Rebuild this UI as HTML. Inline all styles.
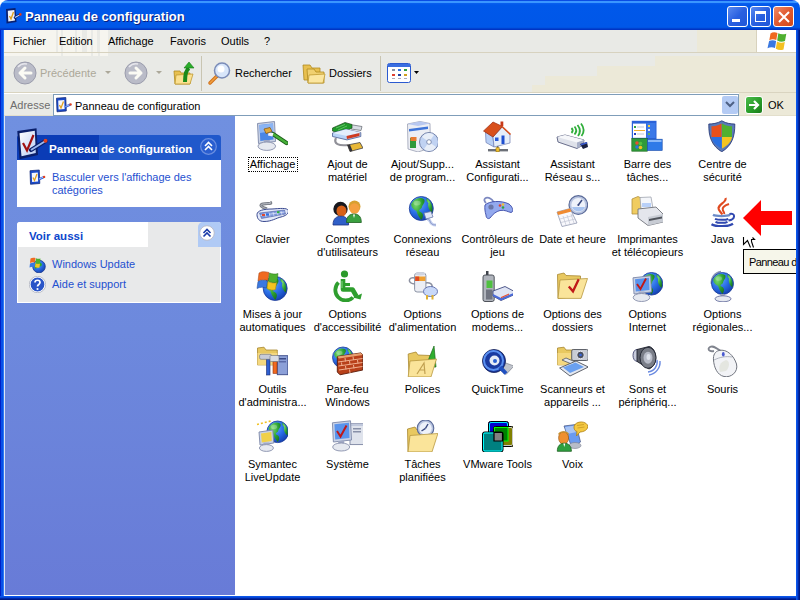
<!DOCTYPE html>
<html><head><meta charset="utf-8">
<style>
*{margin:0;padding:0;box-sizing:border-box}
html,body{width:800px;height:600px;overflow:hidden;background:#fff;font-family:"Liberation Sans",sans-serif;font-size:11px;color:#000}
.a{position:absolute;display:block}
#title{left:0;top:0;width:800px;height:30px;border-radius:8px 8px 0 0;background:linear-gradient(#0a4ce4 0,#0a4ce4 1px,#3a96ff 1px,#3a96ff 3px,#0a60f0 3px,#0058ea 5px,#0057e8 27px,#0050dc 28px,#0034c4 29px,#0034c4 30px)}
#ttl{left:25px;top:9px;font-weight:bold;font-size:13px;line-height:15px;color:#fff;text-shadow:1px 1px 0 #0a1e7c;white-space:nowrap}
.tbtn{position:absolute;top:6px;width:21px;height:21px;border:1px solid #fff;border-radius:3px;background:linear-gradient(135deg,#5a8af0,#2a60e0 50%,#1f56d8)}
#bl{left:0;top:30px;width:4px;height:570px;background:linear-gradient(90deg,#0020c8 0,#0020c8 1px,#0850e8 1px,#0850e8 3px,#2a78f4 3px,#2a78f4 4px)}
#br{left:796px;top:30px;width:4px;height:570px;background:linear-gradient(90deg,#0a55ea 0,#0a55ea 1px,#0646d4 1px,#0646d4 2px,#0028a8 2px,#0028a8 3px,#001a84 3px)}
#bb{left:0;top:596px;width:800px;height:4px;background:linear-gradient(#0a55ea 0,#0a55ea 1px,#0646d4 1px,#0646d4 2px,#0028a8 2px,#0028a8 3px,#001a84 3px)}
#menu{left:4px;top:30px;width:792px;height:22px;background:transparent}
#menubg{left:4px;top:30px;width:792px;height:22px;background:#e9eae6}
#menu span{position:absolute;top:5px;line-height:13px;z-index:2}
#menu{z-index:1}
#logo{left:757px;top:30px;width:39px;height:22px;background:#fff}
#tb{left:4px;top:52px;width:792px;height:41px;background:#e9eae6;border-top:1px solid #d7d2bf}
#tb2{left:4px;top:53px;width:792px;height:3px;background:#e9eae6}
#addr{left:4px;top:92px;width:792px;height:24px;background:#e9eae6;border-top:1px solid #d9d4c0}
#addrw{left:4px;top:93px;width:792px;height:1px;background:#fff}
#abox{left:53px;top:94px;width:686px;height:22px;background:#fff;border:1px solid #7f9db9}
#panel{left:4px;top:116px;width:231px;height:480px;background:linear-gradient(#7090e0,#6d89dd 45%,#687bd7)}
#content{left:235px;top:116px;width:561px;height:480px;background:#fff}
#pbot{left:4px;top:595px;width:231px;height:1px;background:#fff}
#pleft{left:4px;top:116px;width:1px;height:480px;background:#dde4f6}
.lbl{position:absolute;width:75px;text-align:center;line-height:13px;white-space:nowrap}
.tt{position:absolute;line-height:13px;white-space:nowrap}
.lnk{color:#1f50d0}
</style></head><body>
<svg width="0" height="0" style="position:absolute"><defs>
<radialGradient id="gblue" cx="35%" cy="30%" r="75%"><stop offset="0" stop-color="#6ab0ff"/><stop offset=".55" stop-color="#2a6ee6"/><stop offset="1" stop-color="#1440b0"/></radialGradient>
<radialGradient id="ggreen" cx="35%" cy="30%" r="80%"><stop offset="0" stop-color="#7ad870"/><stop offset=".6" stop-color="#2aa030"/><stop offset="1" stop-color="#1a7020"/></radialGradient>
</defs></svg>
<div id="title" class="a"></div>
<svg class="a" style="left:5px;top:7px" width="18" height="19" viewBox="0 0 18 19">
<polygon points="1,2 10.5,1 11.5,15 1.5,16.5" fill="#0a2070"/>
<polygon points="2.8,3.8 9.3,3 10,13.5 3.3,14.5" fill="#eef2fc"/>
<path d="M4.5,9 L6,12 L8.5,5" stroke="#e0a020" stroke-width="1.4" fill="none"/>
<line x1="10" y1="10.5" x2="15" y2="7.5" stroke="#0a2070" stroke-width="2.6" stroke-linecap="round"/>
<line x1="10" y1="10.5" x2="14.5" y2="8" stroke="#b8d0f8" stroke-width="1.2"/>
<circle cx="15.3" cy="7.4" r="1.3" fill="#e04020"/>
</svg>
<div id="ttl" class="a">Panneau de configuration</div>
<div class="tbtn" style="left:727px"><div class="a" style="left:4px;top:12px;width:8px;height:3px;background:#fff"></div></div>
<div class="tbtn" style="left:750px"><div class="a" style="left:4px;top:4px;width:11px;height:11px;border:1px solid #fff;border-top-width:3px"></div></div>
<div class="tbtn" style="left:773px;background:linear-gradient(135deg,#f08a68,#e05a30 50%,#d04818)">
<svg class="a" style="left:4px;top:4px" width="12" height="12" viewBox="0 0 12 12"><path d="M1,1 L11,11 M11,1 L1,11" stroke="#fff" stroke-width="2"/></svg></div>
<div id="bl" class="a"></div>
<div id="br" class="a"></div>
<div id="bb" class="a"></div>
<div id="menubg" class="a"></div>
<div id="menu" class="a">
 <span style="left:9px">Fichier</span>
 <span style="left:55px">Edition</span>
 <span style="left:104px">Affichage</span>
 <span style="left:166px">Favoris</span>
 <span style="left:217px">Outils</span>
 <span style="left:260px">?</span>
</div>
<div class="a" style="left:697px;top:30px;width:60px;height:22px;background:#ece9d8;border-right:1px solid #d8d2bd"></div>
<div id="logo" class="a"></div>
<div class="a" style="left:4px;top:30px;width:104px;height:22px;background:#f6f5ef"></div>
<div class="a" style="left:56px;top:30px;width:2px;height:22px;background:#e9eae6"></div>
<div class="a" style="left:61px;top:30px;width:2px;height:22px;background:#e9eae6"></div>
<div class="a" style="left:75px;top:30px;width:2px;height:22px;background:#e9eae6"></div>
<div class="a" style="left:82px;top:30px;width:5px;height:22px;background:#e9eae6"></div>
<div class="a" style="left:91px;top:30px;width:2px;height:22px;background:#e9eae6"></div>
<div class="a" style="left:97px;top:30px;width:3px;height:22px;background:#e9eae6"></div>
<svg class="a" style="left:766px;top:31px" width="22" height="20" viewBox="0 0 22 20">
<path d="M4.5,2.5 C6.5,1 9,1 11.5,2 L10.3,9 C8,8 5.5,8 3.3,9.2Z" fill="#f06a20"/>
<path d="M12.3,2.3 C14.5,3.5 17,3.7 20.3,2.7 L19,10 C16.5,11 14,11 11.2,9.5Z" fill="#4fb030"/>
<path d="M3.1,10 C5.3,9 7.8,9 10.1,10 L9,17 C6.5,16 4,16 1.5,17.3Z" fill="#3a78e0"/>
<path d="M11,10.5 C13.8,12 16.3,12 18.8,11 L17.5,18.5 C15,19.5 12.5,19.3 9.8,17.8Z" fill="#f4c020"/>
</svg>
<div id="tb" class="a"></div>
<div id="tb2" class="a"></div>
<div class="a" style="left:4px;top:53px;width:104px;height:3px;background:#f6f5ef"></div>
<div class="a" style="left:61px;top:53px;width:2px;height:3px;background:#e9eae6"></div>
<div class="a" style="left:91px;top:53px;width:2px;height:3px;background:#e9eae6"></div>
<div class="a" style="left:98px;top:53px;width:2px;height:3px;background:#e9eae6"></div>
<!-- beige stale regions -->
<div class="a" style="left:655px;top:56px;width:141px;height:10px;background:#ece9d8"></div>
<div class="a" style="left:597px;top:66px;width:199px;height:10px;background:#ece9d8"></div>
<div class="a" style="left:545px;top:76px;width:251px;height:9px;background:#ece9d8"></div>
<div class="a" style="left:532px;top:85px;width:264px;height:7px;background:#ece9d8"></div>
<!-- toolbar items -->
<svg class="a" style="left:13px;top:61px" width="24" height="24" viewBox="0 0 24 24">
<circle cx="12" cy="12" r="11" fill="#babcc8" stroke="#9a9cac" stroke-width="1"/>
<path d="M5,6 A9,9 0 0 1 14,3" stroke="#e6e6ec" stroke-width="1.5" fill="none"/>
<path d="M18,12 L7,12 M12,7 L7,12 L12,17" stroke="#fbfbf4" stroke-width="3" fill="none" stroke-linecap="round" stroke-linejoin="round"/>
</svg>
<div class="tt" style="left:40px;top:67px;color:#aca899">Précédente</div>
<svg class="a" style="left:105px;top:71px" width="7" height="4" viewBox="0 0 7 4"><path d="M0,0 L6,0 L3,3Z" fill="#aca899"/></svg>
<svg class="a" style="left:124px;top:61px" width="24" height="24" viewBox="0 0 24 24">
<circle cx="12" cy="12" r="11" fill="#babcc8" stroke="#9a9cac" stroke-width="1"/>
<path d="M5,6 A9,9 0 0 1 14,3" stroke="#e6e6ec" stroke-width="1.5" fill="none"/>
<path d="M6,12 L17,12 M12,7 L17,12 L12,17" stroke="#fbfbf4" stroke-width="3" fill="none" stroke-linecap="round" stroke-linejoin="round"/>
</svg>
<svg class="a" style="left:156px;top:71px" width="7" height="4" viewBox="0 0 7 4"><path d="M0,0 L6,0 L3,3Z" fill="#aca899"/></svg>
<svg class="a" style="left:173px;top:61px" width="22" height="24" viewBox="0 0 22 24">
<polygon points="1,10 7,10 8,12 17,12 17,23 2,23" fill="#e8c050" stroke="#b08a20" stroke-width=".8"/>
<polygon points="3,14 20,13 17,23 2,23" fill="#fbe090" stroke="#c09a30" stroke-width=".8"/>
<path d="M12,21 C12,14 13,9 16,7" stroke="#1a8a1a" stroke-width="4" fill="none"/>
<polygon points="11,7 16,1 21,7" fill="#2aae2a" stroke="#1a7a1a" stroke-width=".6"/>
</svg>
<div class="a" style="left:201px;top:56px;width:1px;height:35px;background:#c9c5b2"></div>
<svg class="a" style="left:207px;top:61px" width="25" height="25" viewBox="0 0 25 25">
<line x1="3" y1="22" x2="10" y2="15" stroke="#d07018" stroke-width="3.5" stroke-linecap="round"/>
<line x1="3" y1="22" x2="10" y2="15" stroke="#f0a040" stroke-width="1.5" stroke-linecap="round"/>
<circle cx="15" cy="9.5" r="7.5" fill="#d8e6fa" stroke="#7a8cb8" stroke-width="1.5"/>
<circle cx="14" cy="8" r="3.5" fill="#fff"/>
</svg>
<div class="tt" style="left:235px;top:67px">Rechercher</div>
<svg class="a" style="left:302px;top:63px" width="24" height="21" viewBox="0 0 24 21">
<polygon points="1,2 8,2 10,5 18,5 18,17 2,17" fill="#e8c050" stroke="#b08a20" stroke-width=".8"/>
<polygon points="5,6 12,6 14,9 22,9 22,20 6,20" fill="#f0d070" stroke="#b08a20" stroke-width=".8"/>
<polygon points="7,12 23,11 21,20 6,20" fill="#fbe6a0" stroke="#c09a30" stroke-width=".8"/>
</svg>
<div class="tt" style="left:329px;top:67px">Dossiers</div>
<div class="a" style="left:380px;top:56px;width:1px;height:35px;background:#c9c5b2"></div>
<svg class="a" style="left:387px;top:63px" width="25" height="21" viewBox="0 0 25 21">
<rect x="0.5" y="0.5" width="23" height="19" rx="2" fill="#fff" stroke="#2a5ad0" stroke-width="1"/>
<rect x="1" y="1" width="22" height="3" fill="#3a6ee0"/>
<rect x="5" y="6" width="3" height="2" fill="#8890a0"/><rect x="11" y="6" width="3" height="2" fill="#3070e0"/><rect x="17" y="6" width="3" height="2" fill="#30a040"/>
<rect x="5" y="11" width="3" height="2" fill="#e04030"/><rect x="11" y="11" width="3" height="2" fill="#2040a0"/><rect x="17" y="11" width="3" height="2" fill="#d0a020"/>
<rect x="5" y="15" width="3" height="1" fill="#aab"/><rect x="11" y="15" width="3" height="1" fill="#aab"/><rect x="17" y="15" width="3" height="1" fill="#aab"/>
</svg>
<svg class="a" style="left:414px;top:71px" width="5" height="3" viewBox="0 0 5 3"><path d="M0,0 L5,0 L2.5,3Z" fill="#000"/></svg>
<div id="addr" class="a"></div>
<div id="addrw" class="a"></div>
<div class="a" style="left:4px;top:115px;width:49px;height:1px;background:#e3dfcc"></div>
<div class="tt" style="left:10px;top:99px;color:#6d6d6d">Adresse</div>
<div class="a" style="left:739px;top:93px;width:57px;height:23px;background:#ece9d8"></div>
<div class="a" style="left:739px;top:115px;width:57px;height:1px;background:#e3dfcc"></div>
<div id="abox" class="a"></div>
<svg class="a" style="left:56px;top:97px" width="16" height="16" viewBox="0 0 16 16">
<polygon points="0.5,1.2 9.8,0.5 10.3,14 1,14.8" fill="#1a4ac8" stroke="#0a2070" stroke-width=".7"/>
<polygon points="2.2,3.5 8.3,3 8.6,12 2.6,12.6" fill="#f4f6fc"/>
<path d="M3.5,8 L5,11 L7.5,4.5" stroke="#e0a020" stroke-width="1.3" fill="none"/>
<line x1="9" y1="10" x2="14.5" y2="7.5" stroke="#2a5ad8" stroke-width="2.2"/>
<line x1="9.5" y1="9.5" x2="13.5" y2="7.8" stroke="#c8dcfa" stroke-width=".8"/>
<circle cx="14.6" cy="7.4" r="1.2" fill="#e04020"/>
</svg>
<div class="tt" style="left:75px;top:100px">Panneau de configuration</div>
<div class="a" style="left:722px;top:96px;width:16px;height:18px;border-radius:2px;background:#b4cbf4"></div>
<svg class="a" style="left:725px;top:101px" width="10" height="7" viewBox="0 0 10 7"><path d="M1,1 L5,5 L9,1" stroke="#4d6185" stroke-width="2" fill="none"/></svg>
<div class="a" style="left:745px;top:96px;width:18px;height:18px;border-radius:3px;background:linear-gradient(135deg,#4cbc4c,#279a27 60%,#1a7a1a);border:1px solid #fff"></div>
<svg class="a" style="left:747px;top:98px" width="14" height="14" viewBox="0 0 14 14"><path d="M2,7 L11,7 M7,3 L11,7 L7,11" stroke="#fff" stroke-width="2.2" fill="none"/></svg>
<div class="tt" style="left:768px;top:99px">OK</div>
<div id="panel" class="a"></div>
<div id="pleft" class="a"></div>
<div id="pbot" class="a"></div>
<!-- task box 1 -->
<div class="a" style="left:17px;top:135px;width:204px;height:25px;border-radius:3px 3px 0 0;background:linear-gradient(90deg,#0b3cb6 0,#0b3cb6 82px,#2058cb 82px)"></div>
<div class="a" style="left:17px;top:160px;width:204px;height:47px;background:#fff"></div>
<svg class="a" style="left:16px;top:127px" width="32" height="33" viewBox="0 0 32 33">
<defs><linearGradient id="pg" x1="0" y1="0" x2="1" y2="1"><stop offset="0" stop-color="#ffffff"/><stop offset="1" stop-color="#b8cdf4"/></linearGradient></defs>
<polygon points="1.3,4 20.5,1.2 22,28 3.5,32.3" fill="#0a1f6a"/>
<polygon points="3.5,6.2 18.8,3.8 19.8,26 5.5,29.3" fill="url(#pg)"/>
<path d="M7,16 L11,23.5 L17.5,8" stroke="#a01010" stroke-width="2.2" fill="none"/>
<line x1="15" y1="23" x2="29.5" y2="14" stroke="#0a1f6a" stroke-width="4.2" stroke-linecap="round"/>
<line x1="15" y1="23" x2="29.5" y2="14" stroke="#9ab8f0" stroke-width="2"/>
<circle cx="29.5" cy="13.8" r="2" fill="#e04020"/>
</svg>
<div class="tt" style="left:49px;top:142px;color:#fff;font-weight:bold;font-size:11.7px">Panneau de configuration</div>
<svg class="a" style="left:200px;top:138px" width="17" height="17" viewBox="0 0 17 17">
<circle cx="8.5" cy="8.5" r="7.8" fill="#2a5ed0" stroke="#6a8ee0" stroke-width="1.2"/>
<path d="M5,8 L8.5,4.5 L12,8 M5,12 L8.5,8.5 L12,12" stroke="#fff" stroke-width="1.6" fill="none"/>
</svg>
<svg class="a" style="left:29px;top:169px" width="17" height="17" viewBox="0 0 17 17">
<polygon points="1,1.7 10.3,1 10.8,14.5 1.5,15.3" fill="#1a4ac8" stroke="#0a2070" stroke-width=".7"/>
<polygon points="2.7,4 8.8,3.5 9.1,12.5 3.1,13.1" fill="#f4f6fc"/>
<path d="M4,8.5 L5.5,11.5 L8,5" stroke="#e0a020" stroke-width="1.3" fill="none"/>
<line x1="9.5" y1="10.5" x2="15" y2="8" stroke="#2a5ad8" stroke-width="2.2"/>
<line x1="10" y1="10" x2="14" y2="8.3" stroke="#c8dcfa" stroke-width=".8"/>
<circle cx="15.1" cy="7.9" r="1.2" fill="#e04020"/>
</svg>
<div class="tt lnk" style="left:52px;top:171px">Basculer vers l'affichage des<br>catégories</div>
<!-- task box 2 -->
<div class="a" style="left:17px;top:222px;width:204px;height:25px;border-radius:3px 3px 0 0;background:#e8e9ea"></div>
<div class="a" style="left:17px;top:222px;width:131px;height:25px;border-radius:3px 0 0 0;background:#fff"></div>
<div class="a" style="left:198px;top:222px;width:23px;height:25px;border-radius:5px 3px 0 0;background:#b0caf5"></div>
<div class="tt" style="left:29px;top:230px;color:#0c46cc;font-weight:bold;font-size:11.5px">Voir aussi</div>
<svg class="a" style="left:199px;top:225px" width="17" height="17" viewBox="0 0 17 17">
<circle cx="8" cy="8" r="7.3" fill="#fff" stroke="#b8bccc" stroke-width="1"/>
<path d="M4.5,8 L8,4.5 L11.5,8 M4.5,11.5 L8,8 L11.5,11.5" stroke="#1a3aa8" stroke-width="1.6" fill="none"/>
</svg>
<div class="a" style="left:17px;top:247px;width:204px;height:56px;background:#e8e9ea;border:1px solid #fff;border-top:none"></div>
<svg class="a" style="left:29px;top:256px" width="17" height="17" viewBox="0 0 17 17">
<circle cx="10" cy="10.5" r="6.3" fill="url(#gblue)" stroke="#1a3a90" stroke-width=".8"/>
<path d="M6,8 C9,5 13,6 13,9 C11,12 8,10 7,13 C5,12 5,10 6,8Z" fill="#2fa82f"/>
<path d="M1.5,2.5 C3,1.5 4.5,1.5 6.5,2 L6,6.5 C4,6 3,6 1,7Z" fill="#f06a20"/>
<path d="M7,2.2 C8.5,3 10,3 11.5,2.5 L11,7 C9.5,7.5 8,7.3 6.5,6.7Z" fill="#4fb030"/>
<path d="M1,7.5 C3,6.5 4,6.5 6,7 L5.5,11 C4,10.5 2.5,10.5 0.5,11.5Z" fill="#3a78e0"/>
<path d="M6.5,7.2 C8,8 9.5,8 11,7.5 L10.5,11.5 C9,12 7.5,11.8 6,11Z" fill="#f4c420"/>
</svg>
<div class="tt lnk" style="left:52px;top:258px">Windows Update</div>
<svg class="a" style="left:29px;top:276px" width="17" height="17" viewBox="0 0 17 17">
<circle cx="8.5" cy="8.5" r="7.5" fill="#2a55c8" stroke="#fff" stroke-width="1.2"/>
<circle cx="8.5" cy="8.5" r="8.2" fill="none" stroke="#9aa0b0" stroke-width=".6"/>
<path d="M6,6.5 C6,3.5 11,3.5 11,6.5 C11,8.5 8.5,8.5 8.5,10.5" stroke="#fff" stroke-width="1.7" fill="none"/>
<circle cx="8.5" cy="13" r="1.1" fill="#fff"/>
</svg>
<div class="tt lnk" style="left:52px;top:278px">Aide et support</div>
<div id="content" class="a"></div>
<svg class="a" style="left:256px;top:120px" width="32" height="32" viewBox="0 0 32 32"><polygon points="1.5,3.5 18.5,1.5 19.5,21.5 2.5,23.5" fill="#c9d2e6" stroke="#7d88a8" stroke-width=".9"/><polygon points="3.5,5.0 17.0,3.5 17.5,19.5 4.3,21.0" fill="#4a86e6"/>
<polygon points="3.5,5 17,3.5 17.3,11 4,13" fill="#8ab4f4"/><rect x="7.800000000000001" y="20.0" width="6" height="5.2" fill="#a0a8c4"/><ellipse cx="10.8" cy="26.2" rx="8.8" ry="4.2" fill="#e6e9f0" stroke="#8890ac" stroke-width=".9"/>
<line x1="17" y1="14" x2="30.5" y2="23" stroke="#1a5a18" stroke-width="4.2" stroke-linecap="round"/>
<line x1="17" y1="14" x2="30.5" y2="23" stroke="#46b038" stroke-width="2.6" stroke-linecap="round"/>
<polygon points="12.5,12.5 17.5,13 16.5,16.5 12,15.5" fill="#f4f4fa"/>
<polygon points="8,9 14,7.5 16,11.5 10,13.5" fill="#e0a838" stroke="#8a5a18" stroke-width=".8"/>
</svg>
<div class="lbl" style="left:235px;top:158px">Affichage</div>
<svg class="a" style="left:331px;top:120px" width="32" height="32" viewBox="0 0 32 32">
<polygon points="19,4.5 31,6.5 30,10.5 20,9" fill="#d8dce4" stroke="#60646c" stroke-width=".7"/>
<polygon points="1.5,8 14,2.5 21,4.5 21,8 9,13.5 1.5,11" fill="#1f9a2a" stroke="#204a20" stroke-width=".7"/>
<path d="M5,8 L14,4.5 M7,10 L16,6" stroke="#7ad07a" stroke-width=".7"/>
<polygon points="1.5,13 15,9.3 29.8,12.5 29.8,16.5 16,19.9 1.5,16.5" fill="#b8d4f8" stroke="#4a5a90" stroke-width=".8"/>
<polygon points="1.5,13 15,9.3 29.8,12.5 16,16" fill="#e4eefc"/>
<polygon points="15.5,16 28.5,13 28.5,16 16,19" fill="#d03a20"/>
<path d="M5,18 C2,24 8,26 17,25" stroke="#909098" stroke-width="2.2" fill="none"/>
<polygon points="16.5,25 29,22.5 32,28 19,31.5" fill="#e8b838" stroke="#404048" stroke-width=".8"/>
<polygon points="16.5,25 19,24.5 21.5,31 19,31.5" fill="#303038"/>
</svg>
<div class="lbl" style="left:310px;top:158px">Ajout de<br>matériel</div>
<svg class="a" style="left:406px;top:120px" width="32" height="32" viewBox="0 0 32 32">
<polygon points="1.5,4 14,1.5 24,3.5 24.5,28 12,32 2,29" fill="#eceef4" stroke="#9aa0b4" stroke-width=".8"/>
<polygon points="1.5,4 14,1.5 24,3.5 12,6" fill="#b8c8f0"/>
<polygon points="3,9 22,6.5 22,9 3,11.5" fill="#3e74d8"/>
<rect x="4" y="18" width="6" height="10" fill="#2f9a3a"/>
<rect x="4.5" y="17" width="6" height="4" fill="#e87a30"/>
<circle cx="23" cy="22" r="9.5" fill="#c0d2f2" stroke="#6a78a0" stroke-width=".9"/>
<path d="M16,17 A8,8 0 0 1 28,15 L23,22Z" fill="#e8eef8"/>
<path d="M30,27 A8,8 0 0 1 18,29 L23,22Z" fill="#e8eef8"/>
<circle cx="23" cy="22" r="2.3" fill="#fff" stroke="#6a78a0" stroke-width=".8"/>
</svg>
<div class="lbl" style="left:385px;top:158px">Ajout/Supp...<br>de program...</div>
<svg class="a" style="left:481px;top:120px" width="32" height="32" viewBox="0 0 32 32">
<polygon points="4.5,12 12,17 13,27 5,22.5" fill="#b8cff5" stroke="#6a7ab0" stroke-width=".7"/>
<polygon points="12,17 21,7 29,14 29,23 13,27" fill="#e6eefa" stroke="#6a7ab0" stroke-width=".7"/>
<polygon points="2.5,11 12,2 21.5,6.5 12,17" fill="#d8501c" stroke="#9a2a10" stroke-width=".7"/>
<line x1="21" y1="6.5" x2="29.5" y2="14.5" stroke="#d8501c" stroke-width="1.6"/>
<rect x="19.5" y="1.5" width="2.8" height="4.5" fill="#c83818"/>
<rect x="20.5" y="15.5" width="3" height="8.5" fill="#1f4fd0"/>
<rect x="14" y="17.5" width="3.5" height="3.5" fill="#2a5ad8"/>
<rect x="7" y="29" width="20" height="2.4" fill="#6c7078"/>
<rect x="16" y="26" width="1.5" height="3" fill="#6c7078"/>
<rect x="15" y="27.7" width="3.2" height="4" fill="#f0c030" stroke="#a07a10" stroke-width=".6"/>
</svg>
<div class="lbl" style="left:460px;top:158px">Assistant<br>Configurati...</div>
<svg class="a" style="left:556px;top:120px" width="32" height="32" viewBox="0 0 32 32">
<polygon points="1,17 9,15 28,20 27,25 21,28.5 2,22" fill="#dfe2ea" stroke="#5a6080" stroke-width=".9"/>
<polygon points="1,17 9,15 28,20 21,22.5" fill="#f6f7fa"/>
<polygon points="21,22.5 28,20 27,25 21,28.5" fill="#a8b0c8"/>
<polygon points="24,24 31,22 32,27 27,29" fill="#1a2040"/>
<polygon points="24.5,24 31,22 31.2,23.5 25,25.5" fill="#3a5ad0"/>
<path d="M15.5,8 Q18,10.5 15.5,13" stroke="#2fae3a" stroke-width="1.8" fill="none"/>
<path d="M18.5,6.5 Q22,10.5 18.5,14.5" stroke="#2fae3a" stroke-width="1.8" fill="none"/>
<path d="M21.5,5 Q26,10.5 22,16" stroke="#2fae3a" stroke-width="1.8" fill="none"/>
<path d="M25,3.5 Q30,10 25.5,16" stroke="#2fae3a" stroke-width="1.8" fill="none"/>
</svg>
<div class="lbl" style="left:535px;top:158px">Assistant<br>Réseau s...</div>
<svg class="a" style="left:631px;top:120px" width="32" height="32" viewBox="0 0 32 32">
<rect x="0.8" y="0.8" width="24.7" height="18.5" fill="#2a62d8"/>
<rect x="2" y="3.6" width="13" height="14.2" fill="#fff"/>
<rect x="15.5" y="3" width="9" height="15" fill="#3a78e8"/>
<rect x="3" y="6" width="2" height="2" fill="#30a040"/><rect x="6" y="6.5" width="7" height="1" fill="#c0c8d8"/>
<rect x="3" y="10" width="11" height="1" fill="#f0b030"/>
<rect x="3" y="13" width="2" height="2" fill="#2040c0"/><rect x="6" y="13.5" width="7" height="1" fill="#c0c8d8"/>
<rect x="17" y="5" width="2" height="2" fill="#f4d040"/><rect x="17" y="9" width="2" height="2" fill="#e0e8f8"/><rect x="17" y="13" width="2" height="2" fill="#60b060"/>
<rect x="0.8" y="18.5" width="15.6" height="12.7" fill="#2f9a3a" stroke="#1a6a1a" stroke-width=".6"/>
<rect x="16.4" y="19.2" width="14.8" height="11.3" fill="#2f7ae8" stroke="#1a4aa8" stroke-width=".6"/>
<rect x="17" y="20" width="13.5" height="2" fill="#8ab8f8"/>
<circle cx="6" cy="23" r="1.8" fill="#e85030"/><circle cx="9.5" cy="23.5" r="1.8" fill="#50c040"/>
<circle cx="6" cy="27" r="1.8" fill="#3070e0"/><circle cx="9.5" cy="27.5" r="1.8" fill="#f4c020"/>
</svg>
<div class="lbl" style="left:610px;top:158px">Barre des<br>tâches...</div>
<svg class="a" style="left:706px;top:120px" width="32" height="32" viewBox="0 0 32 32">
<path d="M15.8,0.8 C11,3.5 6.5,4 2.8,4 C2.5,17 6,26 15.8,31.8 C25.5,26 29,17 28.8,4 C25,4 20.5,3.5 15.8,0.8Z" fill="#5a7ab8" stroke="#203070" stroke-width=".8"/>
<path d="M15.5,3.5 C11.5,6 8.5,6.3 5.5,6.3 L5.5,17 15.5,17Z" fill="#e8501c"/>
<path d="M16,3.5 C20,6 23,6.3 26,6.3 L26,17 16,17Z" fill="#50b030"/>
<path d="M5.5,17 L15.5,17 15.5,28.5 C9,25 6,21 5.5,17Z" fill="#2a70e0"/>
<path d="M26,17 L16,17 16,28.5 C22.5,25 25.5,21 26,17Z" fill="#f4c420"/>
</svg>
<div class="lbl" style="left:685px;top:158px">Centre de<br>sécurité</div>
<svg class="a" style="left:256px;top:195px" width="32" height="32" viewBox="0 0 32 32">
<path d="M11,14 C5,12 3,10 7,9 C11,8 17,9.5 14,7" stroke="#7c8088" stroke-width="3" fill="none"/>
<path d="M11,14 C5,12 3,10 7,9 C11,8 17,9.5 14,7" stroke="#b8bcc4" stroke-width="1" fill="none"/>
<path d="M1,19.5 C1,15.5 8,14 16,14 C24,13.5 31,12.5 32.3,15.5 C33,19 29,21 25,22 C20,23 16,26.5 8,26.5 C3,26.5 1,23.5 1,19.5Z" fill="#e4eafa" stroke="#3a4a90" stroke-width="1"/>
<path d="M3.5,18 L28.5,15 L29.5,19 L5.5,23.5Z" fill="#7f98dc" stroke="#3a4a90" stroke-width=".5"/>
<path d="M4.5,20.5 L28.5,17" stroke="#e8eefa" stroke-width=".7"/>
<path d="M9,18 L10,22 M13,17.5 L14,21.5 M17,17 L18,21 M21,16.5 L22,20.5 M25,16 L26,20" stroke="#e8eefa" stroke-width=".6"/>
<rect x="6" y="19" width="3" height="2" fill="#e04a30"/>
<rect x="10" y="18.5" width="3" height="2" fill="#3070e0"/>
<rect x="21" y="16.2" width="2.5" height="2" fill="#30b040"/>
</svg>
<div class="lbl" style="left:235px;top:233px">Clavier</div>
<svg class="a" style="left:331px;top:195px" width="32" height="32" viewBox="0 0 32 32">
<circle cx="9.5" cy="14" r="7.2" fill="#18181e"/>
<ellipse cx="10.5" cy="16" rx="5" ry="5.5" fill="#d86018"/>
<path d="M2,30 C2,23 6,21.2 10,21.2 C14,21.2 17.6,23 17.6,30Z" fill="#2f5fc8" stroke="#1a3080" stroke-width=".8"/>
<circle cx="23.5" cy="11.5" r="6" fill="#d8a030"/>
<ellipse cx="23.5" cy="13.5" rx="5" ry="5.3" fill="#f4a040"/>
<path d="M15.5,27.5 C15.5,21 19,19 23,19 C27,19 30.3,21 30.3,27.5Z" fill="#3aa040" stroke="#1d6020" stroke-width=".8"/>
<polygon points="22,19.5 24,19.5 23,23" fill="#fff"/>
</svg>
<div class="lbl" style="left:310px;top:233px">Comptes<br>d'utilisateurs</div>
<svg class="a" style="left:406px;top:195px" width="32" height="32" viewBox="0 0 32 32"><circle cx="15.3" cy="13.5" r="12" fill="url(#gblue)" stroke="#1a3a98" stroke-width=".8"/><path d="M5.10,9.30 C8.10,3.30 14.10,1.50 18.30,4.50 C19.50,8.10 16.50,9.30 15.90,12.30 C15.30,14.70 12.30,14.10 13.50,16.50 C17.10,17.70 18.30,20.70 15.30,24.90 C12.90,21.90 11.10,18.90 10.50,15.90 C8.10,14.70 5.70,13.50 5.10,9.30Z" fill="url(#ggreen)"/><path d="M20.70,3.30 C25.50,6.30 27.30,12.30 26.10,17.70 C23.10,15.90 21.30,11.10 22.50,8.10 C20.70,6.90 20.10,5.10 20.70,3.30Z" fill="url(#ggreen)"/><ellipse cx="11.100000000000001" cy="8.1" rx="3.5999999999999996" ry="2.4000000000000004" fill="#fff" opacity=".25"/>
<path d="M21,24 C26,24 22,30 30,30" stroke="#c4d0f0" stroke-width="3" fill="none"/>
<path d="M21,24 C26,24 22,30 30,30" stroke="#6a78b0" stroke-width=".6" fill="none"/>
<polygon points="18,18 25,16.5 27,22 20,24" fill="#dfe6f8" stroke="#6a78a8" stroke-width=".8"/>
</svg>
<div class="lbl" style="left:385px;top:233px">Connexions<br>réseau</div>
<svg class="a" style="left:481px;top:195px" width="32" height="32" viewBox="0 0 32 32">
<path d="M5,8 C1,4 5,1 10,4 C12,5 13,8 12,10" stroke="#7c88c0" stroke-width="1.8" fill="none"/>
<path d="M4,10 C8,6 20,5 28,9 C32,12 33,17 30,17.5 C27,17 24,14.5 19,15.5 C15,16.5 12,19 9,23 C7,24.5 5,23 5,20 C4,17 3.5,13 4,10Z" fill="#93a9ee" stroke="#3a4aa8" stroke-width=".9"/>
<circle cx="10" cy="12" r="2.6" fill="#6a76a8"/>
<circle cx="19" cy="10.5" r="1.3" fill="#e04030"/>
<circle cx="22" cy="9.5" r="1.3" fill="#f0c030"/>
<circle cx="22" cy="12.5" r="1.3" fill="#30a040"/>
</svg>
<div class="lbl" style="left:460px;top:233px">Contrôleurs de<br>jeu</div>
<svg class="a" style="left:556px;top:195px" width="32" height="32" viewBox="0 0 32 32">
<circle cx="22.3" cy="10" r="9.3" fill="#b8c4e0" stroke="#5a6a98" stroke-width="1.2"/>
<circle cx="22.3" cy="10" r="7" fill="#eef2fa"/>
<path d="M16,12 A7,7 0 0 0 29,12Z" fill="#a8c4f0"/>
<line x1="22.3" y1="10" x2="26" y2="5" stroke="#3a4a80" stroke-width="1.5"/>
<circle cx="22.3" cy="10" r="1" fill="#3a4a80"/>
<polygon points="1,17 14,13.5 21,28 6,31.5" fill="#f8f8fc" stroke="#9098b0" stroke-width=".8"/>
<polygon points="1,17 14,13.5 15.5,16.5 2.2,20" fill="#f08a30"/>
<path d="M4,24 L17,20.5 M5,27.5 L19,24 M7,21 L10,30 M11,20 L14,29 M15,19 L18,28" stroke="#c0c4d4" stroke-width=".7"/>
</svg>
<div class="lbl" style="left:535px;top:233px">Date et heure</div>
<svg class="a" style="left:631px;top:195px" width="32" height="32" viewBox="0 0 32 32">
<polygon points="1,4 7,1.5 10,3 10,19 1,19" fill="#f0cc60" stroke="#b09040" stroke-width=".8"/>
<polygon points="9,2.5 20,2 22,13.5 10,13.5" fill="#f4f6fa" stroke="#a0a4b0" stroke-width=".8"/>
<rect x="11" y="8" width="9" height="4" fill="#b8d0f8"/>
<polygon points="7,14 25,12 32,19 32,27 17,30.5 7,23" fill="#e4e6ec" stroke="#70747c" stroke-width=".9"/>
<polygon points="17,22 32,19 32,27 17,30.5" fill="#c8ccd4"/>
<polygon points="18,24 31,21.5 31,23.5 18,26" fill="#50545c"/>
</svg>
<div class="lbl" style="left:610px;top:233px">Imprimantes<br>et télécopieurs</div>
<svg class="a" style="left:706px;top:195px" width="32" height="32" viewBox="0 0 32 32">
<path d="M19.5,3 C21,7 13,9 12.5,13 C12.2,15.5 15,17 16.3,19.5" stroke="#e04a20" stroke-width="2.2" fill="none"/>
<path d="M23,9 C18.5,10.5 16,12.5 16.8,15 C17.3,16.5 18.5,17.5 18.2,19" stroke="#e04a20" stroke-width="2" fill="none"/>
<path d="M7,19.8 C10,21.5 21,21.5 24,19.8" stroke="#6a8ac8" stroke-width="2.4" fill="none"/>
<path d="M9,23.8 C12,25.2 20,25.2 22.3,23.8" stroke="#3048b0" stroke-width="2" fill="none"/>
<path d="M9.5,26.8 C12,28.2 19,28.2 21.5,26.8" stroke="#3048b0" stroke-width="2" fill="none"/>
<path d="M23.5,19 C30,17.5 29.5,24.5 22.5,25.5" stroke="#3048b0" stroke-width="2" fill="none"/>
<path d="M5.5,29.3 C10,32 22,32 27,28.8" stroke="#3048b0" stroke-width="2.4" fill="none"/>
</svg>
<div class="lbl" style="left:685px;top:233px">Java</div>
<svg class="a" style="left:256px;top:270px" width="32" height="32" viewBox="0 0 32 32"><circle cx="19.2" cy="18.5" r="12" fill="url(#gblue)" stroke="#1a3a98" stroke-width=".8"/><path d="M9.00,14.30 C12.00,8.30 18.00,6.50 22.20,9.50 C23.40,13.10 20.40,14.30 19.80,17.30 C19.20,19.70 16.20,19.10 17.40,21.50 C21.00,22.70 22.20,25.70 19.20,29.90 C16.80,26.90 15.00,23.90 14.40,20.90 C12.00,19.70 9.60,18.50 9.00,14.30Z" fill="url(#ggreen)"/><path d="M24.60,8.30 C29.40,11.30 31.20,17.30 30.00,22.70 C27.00,20.90 25.20,16.10 26.40,13.10 C24.60,11.90 24.00,10.10 24.60,8.30Z" fill="url(#ggreen)"/><ellipse cx="15.0" cy="13.1" rx="3.5999999999999996" ry="2.4000000000000004" fill="#fff" opacity=".25"/>
<path d="M3,3 C6,1 9,1.5 13,2.5 L12,10.5 C8,9.5 5,9.5 2,11Z" fill="#f06a20" stroke="#a04010" stroke-width=".5"/>
<path d="M13.5,3 C16,4 19,4.5 22,3.5 L21,12 C18,13 15.5,12.5 12.5,11Z" fill="#4fb030" stroke="#2a7018" stroke-width=".5"/>
<path d="M2,11.5 C5,10 8,10 11.5,11 L10.5,18 C7,17 4,17 1,18.5Z" fill="#3a78e0" stroke="#1a4090" stroke-width=".5"/>
<path d="M12,11.5 C15,13 18,13.5 20.5,12.5 L19.5,19.5 C17,20.5 14,20 11,18.5Z" fill="#f4c420" stroke="#a08010" stroke-width=".5"/>
</svg>
<div class="lbl" style="left:235px;top:308px">Mises à jour<br>automatiques</div>
<svg class="a" style="left:331px;top:270px" width="32" height="32" viewBox="0 0 32 32">
<circle cx="13.5" cy="4" r="3.6" fill="#2a9a2a"/>
<path d="M12,9 L12,19.5 L21.5,19.5 L25.5,26.5" stroke="#2e9e2e" stroke-width="4.6" fill="none" stroke-linejoin="round"/>
<path d="M12,14.5 L19,14.5" stroke="#2e9e2e" stroke-width="3"/>
<path d="M7.5,12.5 A10,10 0 1 0 22,27.5" stroke="#2e9e2e" stroke-width="3.8" fill="none"/>
<polygon points="22,27.5 31,23.5 29.5,29.5" fill="#2e9e2e"/>
<path d="M11,11 L11,18" stroke="#8ad88a" stroke-width="1"/>
</svg>
<div class="lbl" style="left:310px;top:308px">Options<br>d'accessibilité</div>
<svg class="a" style="left:406px;top:270px" width="32" height="32" viewBox="0 0 32 32">
<path d="M9,8 C2,6 1,14 9,14" stroke="#8c90a0" stroke-width="1.5" fill="none"/>
<path d="M19,13 C24,12 27,14 26,18" stroke="#8c90a0" stroke-width="1.5" fill="none"/>
<rect x="8.6" y="3" width="11.3" height="19" rx="2.5" fill="#eceef4" stroke="#80889c" stroke-width=".9"/>
<ellipse cx="14.2" cy="3.8" rx="5" ry="1.6" fill="#d0d4e0"/>
<rect x="9.2" y="6.5" width="10.2" height="4.5" fill="#f0a030"/>
<rect x="9.2" y="6.5" width="4" height="4.5" fill="#e04a20"/>
<ellipse cx="24.5" cy="21.5" rx="7" ry="5" fill="#c8d8f8" stroke="#5a6aa8" stroke-width=".9"/>
<rect x="20" y="25" width="2" height="4.5" fill="#e0b030"/>
<rect x="25.5" y="25" width="2" height="4.5" fill="#e0b030"/>
</svg>
<div class="lbl" style="left:385px;top:308px">Options<br>d'alimentation</div>
<svg class="a" style="left:481px;top:270px" width="32" height="32" viewBox="0 0 32 32">
<rect x="5" y="1" width="2.5" height="5" fill="#40444c"/>
<rect x="2" y="5" width="11.2" height="26.5" rx="2" fill="#b0b4bc" stroke="#40444c" stroke-width=".9"/>
<rect x="5.5" y="10.5" width="6" height="7.5" fill="#50c040"/>
<rect x="5" y="19.5" width="6.5" height="10" fill="#707480"/>
<polygon points="12,21 24,16.5 32.5,21 32.5,25 20,30.5 12,26" fill="#dfe4f4" stroke="#404a80" stroke-width=".9"/>
<polygon points="12,26 20,30.5 32.5,25 32.5,23 20,28 12,24" fill="#4a6ad8"/>
<polygon points="20,27 28,23.5 28,24.8 20,28.3" fill="#e85030"/>
</svg>
<div class="lbl" style="left:460px;top:308px">Options de<br>modems...</div>
<svg class="a" style="left:556px;top:270px" width="32" height="32" viewBox="0 0 32 32">
<polygon points="1.5,4.5 8,3 10,5.5 24.5,6 24.5,26 2,28.5" fill="#e8c860" stroke="#a88830" stroke-width=".8"/>
<polygon points="4,10 31.5,8.5 25,28.4 2,28.4" fill="#fae49a" stroke="#b89840" stroke-width=".8"/>
<path d="M12.8,16.4 L17,21.3 L22.7,9.3" stroke="#c01818" stroke-width="2.3" fill="none"/>
</svg>
<div class="lbl" style="left:535px;top:308px">Options des<br>dossiers</div>
<svg class="a" style="left:631px;top:270px" width="32" height="32" viewBox="0 0 32 32"><circle cx="20.5" cy="13.8" r="11.3" fill="url(#gblue)" stroke="#1a3a98" stroke-width=".8"/><path d="M10.89,9.85 C13.72,4.20 19.37,2.50 23.32,5.32 C24.45,8.71 21.63,9.85 21.07,12.67 C20.50,14.93 17.68,14.37 18.80,16.62 C22.20,17.76 23.32,20.58 20.50,24.54 C18.24,21.71 16.55,18.89 15.98,16.06 C13.72,14.93 11.46,13.80 10.89,9.85Z" fill="url(#ggreen)"/><path d="M25.59,4.20 C30.11,7.02 31.80,12.67 30.67,17.76 C27.84,16.06 26.15,11.54 27.28,8.71 C25.59,7.58 25.02,5.89 25.59,4.20Z" fill="url(#ggreen)"/><ellipse cx="16.545" cy="8.715" rx="3.39" ry="2.2600000000000002" fill="#fff" opacity=".25"/><polygon points="2,7.8 19.5,5.8 20.5,22 3,24" fill="#c9d2e6" stroke="#7d88a8" stroke-width=".9"/><polygon points="4,9.3 18.0,7.8 18.5,20 4.8,21.5" fill="#5a94ec"/>
<path d="M6,14 L9.5,19 L15,8.5" stroke="#c01818" stroke-width="1.9" fill="none"/>
<rect x="7.5" y="21.5" width="6" height="5" fill="#a0a8c4"/><ellipse cx="10.5" cy="27.5" rx="8.3" ry="4" fill="#e6e9f0" stroke="#8890ac" stroke-width=".9"/></svg>
<div class="lbl" style="left:610px;top:308px">Options<br>Internet</div>
<svg class="a" style="left:706px;top:270px" width="32" height="32" viewBox="0 0 32 32">
<path d="M5.5,14 A11,11 0 0 1 15,1.5" stroke="#8a94b4" stroke-width="1.6" fill="none"/>
<circle cx="16.5" cy="13.5" r="11" fill="url(#gblue)" stroke="#1a3a98" stroke-width=".8"/><path d="M7.15,9.65 C9.90,4.15 15.40,2.50 19.25,5.25 C20.35,8.55 17.60,9.65 17.05,12.40 C16.50,14.60 13.75,14.05 14.85,16.25 C18.15,17.35 19.25,20.10 16.50,23.95 C14.30,21.20 12.65,18.45 12.10,15.70 C9.90,14.60 7.70,13.50 7.15,9.65Z" fill="url(#ggreen)"/><path d="M21.45,4.15 C25.85,6.90 27.50,12.40 26.40,17.35 C23.65,15.70 22.00,11.30 23.10,8.55 C21.45,7.45 20.90,5.80 21.45,4.15Z" fill="url(#ggreen)"/><ellipse cx="12.65" cy="8.55" rx="3.3" ry="2.2" fill="#fff" opacity=".25"/>
<rect x="14.5" y="24" width="4" height="4" fill="#9aa0b8"/>
<ellipse cx="17" cy="28.8" rx="8" ry="3" fill="#e6e9f0" stroke="#6a72a0" stroke-width=".9"/>
</svg>
<div class="lbl" style="left:685px;top:308px">Options<br>régionales...</div>
<svg class="a" style="left:256px;top:345px" width="32" height="32" viewBox="0 0 32 32">
<polygon points="1.5,3 8,2.2 10,5 21.3,5 21.3,19.9 1.5,19.9" fill="#e8c860" stroke="#a88830" stroke-width=".8"/>
<polygon points="1.5,8 21.3,8 21.3,19.9 1.5,19.9" fill="#f4d880"/>
<rect x="21.3" y="10.7" width="10.5" height="19" fill="#8ca0d8" stroke="#3a4a88" stroke-width=".9"/>
<rect x="23" y="13" width="7" height="1.5" fill="#3a4a88"/><rect x="23" y="16" width="7" height="1.5" fill="#5a6aa8"/>
<rect x="10.5" y="14" width="3.5" height="16" fill="#2e5fd0" stroke="#1a2a70" stroke-width=".6"/>
<rect x="17" y="16.4" width="4" height="12" fill="#f06a20" stroke="#903010" stroke-width=".6"/>
<rect x="3.6" y="9.3" width="12" height="5" rx="1.5" fill="#c8ccd8" stroke="#6a6e78" stroke-width=".6"/>
<rect x="14" y="10.5" width="9" height="6" rx="1" fill="#d8dce4" stroke="#6a6e78" stroke-width=".6"/>
</svg>
<div class="lbl" style="left:235px;top:383px">Outils<br>d'administra...</div>
<svg class="a" style="left:331px;top:345px" width="32" height="32" viewBox="0 0 32 32"><circle cx="12" cy="12.5" r="10.5" fill="url(#gblue)" stroke="#1a3a98" stroke-width=".8"/><path d="M3.08,8.82 C5.70,3.58 10.95,2.00 14.62,4.62 C15.68,7.77 13.05,8.82 12.53,11.45 C12.00,13.55 9.38,13.03 10.43,15.12 C13.57,16.18 14.62,18.80 12.00,22.48 C9.90,19.85 8.32,17.23 7.80,14.60 C5.70,13.55 3.60,12.50 3.08,8.82Z" fill="url(#ggreen)"/><path d="M16.73,3.58 C20.92,6.20 22.50,11.45 21.45,16.18 C18.82,14.60 17.25,10.40 18.30,7.77 C16.73,6.72 16.20,5.15 16.73,3.58Z" fill="url(#ggreen)"/><ellipse cx="8.325" cy="7.7749999999999995" rx="3.15" ry="2.1" fill="#fff" opacity=".25"/>
<polygon points="6.3,11.5 30,7.9 31.8,10 31.8,25 9,29.8 6.3,27" fill="#b8401a" stroke="#5a1a08" stroke-width=".9"/>
<polygon points="6.3,11.5 30,7.9 31.8,10 8,13.5" fill="#e8a070"/>
<path d="M7,17 L31.5,13.5 M7.5,21 L31.5,17.5 M8,25 L31.5,21.5" stroke="#f0b090" stroke-width="1"/>
<path d="M14,13 L14.5,16.5 M22,11.5 L22.5,15 M10.5,17.5 L11,21 M18.5,16 L19,19.5 M26.5,15 L27,18.5 M14.5,21 L15,24.5 M22.5,20 L23,23.5 M18.5,24.5 L19,28" stroke="#f0b090" stroke-width="1"/>
</svg>
<div class="lbl" style="left:310px;top:383px">Pare-feu<br>Windows</div>
<svg class="a" style="left:406px;top:345px" width="32" height="32" viewBox="0 0 32 32">
<polygon points="2.2,9 10,7 12,10 24,10.5 24,29 3,31.5" fill="#e8c860" stroke="#a88830" stroke-width=".8"/>
<polygon points="19.5,22 28,1 30,22" fill="#2fae2f" stroke="#1a6a1a" stroke-width=".7"/>
<polygon points="4,16 30.5,14 25,31.9 2.2,31.9" fill="#fae49a" stroke="#b89840" stroke-width=".8"/>
<path d="M11,29 L18,18 L19,29 M13.5,25 L18.5,25" stroke="#c0a050" stroke-width="1.2" fill="none"/>
</svg>
<div class="lbl" style="left:385px;top:383px">Polices</div>
<svg class="a" style="left:481px;top:345px" width="32" height="32" viewBox="0 0 32 32">
<polygon points="22,17 33,21 25,29.5 20,26" fill="#c0c4cc" stroke="#6a6e7a" stroke-width=".6"/>
<circle cx="13" cy="16" r="11.5" fill="#1a3aa0" stroke="#101a50" stroke-width=".8"/>
<circle cx="12.5" cy="15.5" r="9.5" fill="none" stroke="#5a90f0" stroke-width="2"/>
<circle cx="13.5" cy="15.5" r="5" fill="#e6ecf6"/>
<circle cx="14" cy="16" r="2" fill="#2a60d0"/>
<path d="M19,22 L25,28.5" stroke="#2050c0" stroke-width="4"/>
</svg>
<div class="lbl" style="left:460px;top:383px">QuickTime</div>
<svg class="a" style="left:556px;top:345px" width="32" height="32" viewBox="0 0 32 32">
<polygon points="1.5,3 8,2.2 10,5 18.5,5 18.5,19.9 1.5,19.9" fill="#e8c860" stroke="#a88830" stroke-width=".8"/>
<polygon points="1.5,8 18.5,8 18.5,19.9 1.5,19.9" fill="#f4d880"/>
<rect x="15.7" y="4.5" width="16.5" height="11" rx="1.5" fill="#c8ccd4" stroke="#50545c" stroke-width=".9"/>
<circle cx="24.5" cy="10" r="3.8" fill="#4a5060" stroke="#e8e8f0" stroke-width="1"/>
<circle cx="24.5" cy="10" r="1.3" fill="#3a6ae0"/>
<polygon points="6,15 10,13 29,21 25,23" fill="#e4e8f0" stroke="#50545c" stroke-width=".8"/>
<polygon points="3.6,23 20,16 32.4,22 14,31" fill="#e4e8f0" stroke="#50545c" stroke-width=".9"/>
<polygon points="7,22.5 19.5,17.5 28,22 14,28" fill="#6aa0f0"/>
</svg>
<div class="lbl" style="left:535px;top:383px">Scanneurs et<br>appareils ...</div>
<svg class="a" style="left:631px;top:345px" width="32" height="32" viewBox="0 0 32 32">
<ellipse cx="6" cy="10.4" rx="4" ry="6" fill="#c8ccdc" stroke="#40446c" stroke-width=".9"/>
<path d="M6,4.5 L18,1.5 C26,3 28,20 18,24 L6,16.4Z" fill="#5a5e68" stroke="#202430" stroke-width=".9"/>
<ellipse cx="17" cy="12.8" rx="8" ry="10.5" fill="#7a7e88" stroke="#202430" stroke-width=".9"/>
<ellipse cx="17" cy="12.8" rx="4.5" ry="6" fill="#b8bcc8"/>
<ellipse cx="17.5" cy="12" rx="2" ry="3" fill="#e0e4ec"/>
<path d="M26,15 A10,10 0 0 1 17,27 M29,16 A13,13 0 0 1 18,30" stroke="#6a8ae0" stroke-width="1.4" fill="none"/>
</svg>
<div class="lbl" style="left:610px;top:383px">Sons et<br>périphériq...</div>
<svg class="a" style="left:706px;top:345px" width="32" height="32" viewBox="0 0 32 32">
<path d="M8,6 C3,7 1,4 4,2 C7,0 10,3 15,6" stroke="#80848e" stroke-width="1.8" fill="none"/>
<path d="M13,5.5 C21,3.5 28,11 30.5,19 C32.5,27 25,33 18,31.5 C11,30 8,22 7.5,15 C7,10 9,6.5 13,5.5Z" fill="#f2f3f6" stroke="#70747e" stroke-width="1"/>
<path d="M8,15 C14,12 20,11 26,12" stroke="#a0a4b0" stroke-width=".8" fill="none"/>
<ellipse cx="17.3" cy="9.3" rx="1.4" ry="2.3" fill="#4a5ad0"/>
<path d="M14,27 C12,22 14,17 20,15 C24,16 24,22 20,26Z" fill="#e4e6e0"/>
</svg>
<div class="lbl" style="left:685px;top:383px">Souris</div>
<svg class="a" style="left:256px;top:420px" width="32" height="32" viewBox="0 0 32 32">
<path d="M1,4.5 L15,1" stroke="#f0c020" stroke-width="1.6" stroke-dasharray="2,2"/>
<circle cx="21.7" cy="11.8" r="10.8" fill="url(#gblue)" stroke="#1a3a98" stroke-width=".8"/><path d="M12.52,8.02 C15.22,2.62 20.62,1.00 24.40,3.70 C25.48,6.94 22.78,8.02 22.24,10.72 C21.70,12.88 19.00,12.34 20.08,14.50 C23.32,15.58 24.40,18.28 21.70,22.06 C19.54,19.36 17.92,16.66 17.38,13.96 C15.22,12.88 13.06,11.80 12.52,8.02Z" fill="url(#ggreen)"/><path d="M26.56,2.62 C30.88,5.32 32.50,10.72 31.42,15.58 C28.72,13.96 27.10,9.64 28.18,6.94 C26.56,5.86 26.02,4.24 26.56,2.62Z" fill="url(#ggreen)"/><ellipse cx="17.919999999999998" cy="6.94" rx="3.24" ry="2.16" fill="#fff" opacity=".25"/><polygon points="3,12 16.8,10 17.8,23 4,25" fill="#c9d2e6" stroke="#7d88a8" stroke-width=".9"/><polygon points="5,13.5 15.3,12 15.8,21 5.8,22.5" fill="#f0d048"/><rect x="7.4" y="22.6" width="6" height="4.4" fill="#a0a8c4"/><ellipse cx="10.4" cy="28" rx="7" ry="3.4" fill="#e6e9f0" stroke="#8890ac" stroke-width=".9"/></svg>
<div class="lbl" style="left:235px;top:458px">Symantec<br>LiveUpdate</div>
<svg class="a" style="left:331px;top:420px" width="32" height="32" viewBox="0 0 32 32">
<rect x="19" y="3.6" width="13.5" height="21" fill="#dfe3ec" stroke="#7c84a0" stroke-width=".9"/>
<polygon points="19,3.6 32.5,3.6 32.5,6 19,6" fill="#c0c8dc"/>
<rect x="22" y="8" width="8" height="1.5" fill="#8890a8"/><rect x="22" y="11" width="8" height="1.5" fill="#8890a8"/>
<polygon points="1.4,2.8 19.5,0.8 20.5,20 2.4,22" fill="#c9d2e6" stroke="#7d88a8" stroke-width=".9"/><polygon points="3.4,4.3 18.0,2.8 18.5,18 4.199999999999999,19.5" fill="#5a94ec"/>
<path d="M6,11 L9.5,16.5 L15.5,5.5" stroke="#c01818" stroke-width="2" fill="none"/>
<rect x="7.199999999999999" y="21" width="6" height="5" fill="#a0a8c4"/><ellipse cx="10.2" cy="27" rx="8.5" ry="4" fill="#e6e9f0" stroke="#8890ac" stroke-width=".9"/></svg>
<div class="lbl" style="left:310px;top:458px">Système</div>
<svg class="a" style="left:406px;top:420px" width="32" height="32" viewBox="0 0 32 32">
<polygon points="1.5,9 9,7 11,10 25,10.5 25,29 2,31.9" fill="#e8c860" stroke="#a88830" stroke-width=".8"/>
<circle cx="19.5" cy="8.3" r="8.3" fill="#b8c4e0" stroke="#5a6a98" stroke-width="1.1"/>
<circle cx="19.5" cy="8.3" r="6.2" fill="#eef2fa"/>
<line x1="19.5" y1="8.3" x2="15.5" y2="11" stroke="#3a4a80" stroke-width="1.4"/>
<line x1="19.5" y1="8.3" x2="22" y2="4" stroke="#3a4a80" stroke-width="1.4"/>
<polygon points="4,15.5 31.9,13.5 26,31.9 2,31.9" fill="#fae49a" stroke="#b89840" stroke-width=".8"/>
</svg>
<div class="lbl" style="left:385px;top:458px">Tâches<br>planifiées</div>
<svg class="a" style="left:481px;top:420px" width="32" height="32" viewBox="0 0 32 32">
<rect x="7.5" y="1.5" width="20" height="20" rx="2" fill="#0000d0" stroke="#000" stroke-width="1"/>
<rect x="8.5" y="2.5" width="18" height="18" rx="1.5" fill="none" stroke="#00e8ff" stroke-width="1"/>
<rect x="12.5" y="6.5" width="20" height="20" rx="2" fill="#808000" stroke="#000" stroke-width="1"/>
<rect x="13.5" y="7.5" width="18" height="18" rx="1.5" fill="none" stroke="#c8c8c8" stroke-width="1"/>
<rect x="13" y="7" width="14" height="14" fill="#008000"/>
<rect x="13.5" y="7.5" width="13.5" height="13.5" fill="none" stroke="#00ff00" stroke-width="1"/>
<rect x="1.5" y="12" width="20.5" height="20" rx="2" fill="#008080" stroke="#000" stroke-width="1"/>
<rect x="2.5" y="13" width="18.5" height="18" rx="1.5" fill="none" stroke="#00ffff" stroke-width="1"/>
<rect x="13" y="12.5" width="8.5" height="8.5" fill="#808080"/>
<path d="M13,12.5 L13,21 L21.5,21 L21.5,12.5Z" fill="none" stroke="#000" stroke-width="1.2"/>
</svg>
<div class="lbl" style="left:460px;top:458px">VMware Tools</div>
<svg class="a" style="left:556px;top:420px" width="32" height="32" viewBox="0 0 32 32">
<polygon points="8,6 20,4.5 24.5,22 16,28" fill="#6a9af0" stroke="#50608a" stroke-width=".8"/>
<polygon points="9,7 19.5,5.5 21,12 11,14" fill="#a8c4f4"/>
<ellipse cx="19" cy="25.5" rx="6" ry="3" fill="#b8bcc8" stroke="#7a7e90" stroke-width=".6"/>
<path d="M18,8 C17,2 28,-0.5 31.5,5 C33,10 27,12 24,12 L20.5,16 21,11.5 C19,11 18.5,10 18,8Z" fill="#f4c840" stroke="#b08010" stroke-width=".8"/>
<path d="M21,5.5 L28,4.5 M21.5,8 L28.5,7" stroke="#c09020" stroke-width=".7"/>
<ellipse cx="7.6" cy="18" rx="5" ry="6.2" fill="#f09030" stroke="#905010" stroke-width=".6"/>
<path d="M2.6,14.5 C4,11 11,11 12.6,14.5" stroke="#c89030" stroke-width="1.4" fill="none"/>
<path d="M1.3,31.3 C1.3,26 4,23.2 8.3,23.2 C12.6,23.2 15.4,26 15.4,31.3Z" fill="#2fa040" stroke="#1d6020" stroke-width=".8"/>
<polygon points="7.3,23.5 9.3,23.5 8.3,27" fill="#fff"/>
</svg>
<div class="lbl" style="left:535px;top:458px">Voix</div>

<!-- focus rect on Affichage -->
<div class="a" style="left:248px;top:157px;width:50px;height:15px;border:1px dotted #000"></div>
<!-- red arrow -->
<svg class="a" style="left:740px;top:197px" width="56" height="42" viewBox="0 0 56 42">
<path d="M3,21 C10,14 16,8 21,3 L21,14 L52,14 L52,28 L21,28 L21,39 C16,34 10,28 3,21Z" fill="#ff0000"/>
</svg>
<!-- cursor -->
<svg class="a" style="left:740px;top:234px" width="18" height="16" viewBox="0 0 18 16">
<path d="M3.5,3 L3.5,10.5 L7.5,6.5 L10.5,13.5 M11.5,7.5 L11.5,5.5 L14.5,5.5 L12.5,3.5 M11.5,7.5 L13.5,13.5" stroke="#000" stroke-width="1.1" fill="none"/>
<path d="M4,9 L7.5,6 L10.5,13 L13,13 L11.5,8 L4,8Z" fill="#fff" opacity="0"/>
</svg>
<!-- tooltip -->
<div class="a" style="left:743px;top:249px;width:60px;height:25px;background:#f6f6ea;border:1px solid #000"></div>
<div class="tt" style="left:749px;top:256px;letter-spacing:-0.6px">Panneau d</div>
<div id="br" class="a"></div>
</body></html>
